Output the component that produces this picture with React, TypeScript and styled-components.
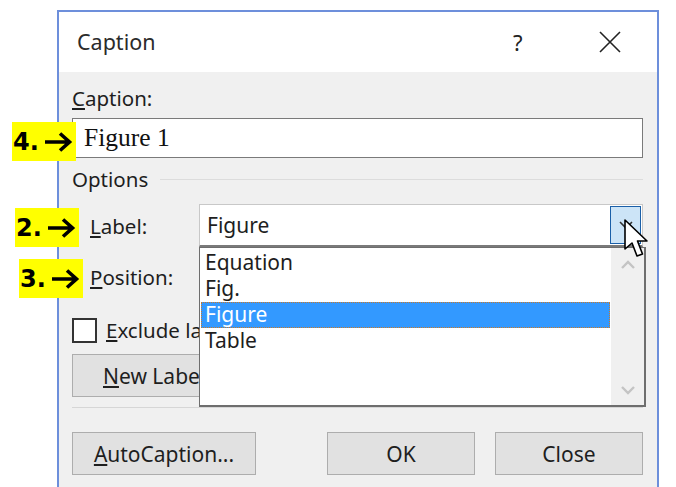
import * as React from 'react';
import styled, { createGlobalStyle } from 'styled-components';

const GlobalStyle = createGlobalStyle`
  html, body { margin: 0; padding: 0; background: #ffffff; }
  body { width: 676px; height: 487px; overflow: hidden; font-family: "Noto Sans", "Open Sans", sans-serif; }
`;

const Page = styled.div`
  position: relative;
  width: 676px;
  height: 487px;
  padding: 10px 0 0 57px;
  box-sizing: border-box;
  background: #ffffff;
`;

const Dialog = styled.div`
  position: relative;
  width: 602px;
  height: 477px;
  box-sizing: border-box;
  border: 2px solid #6d8fdb;
  border-bottom: none;
  display: flex;
  flex-direction: column;
  background: #f0f0f0;
`;

const TitleBar = styled.div`
  height: 60px;
  flex: none;
  background: #ffffff;
  display: flex;
  align-items: center;
  padding: 0 0 0 18px;
  color: #2b2b2b;
  font-size: 21.5px;
`;

const Title = styled.div`
  flex: 1;
  margin-top: -2px;
`;

const HelpMark = styled.div`
  width: 20px;
  margin-right: 66px;
  font-size: 22px;
  color: #222;
`;

const CloseBox = styled.div`
  width: 22px;
  height: 22px;
  margin-right: 36px;
  margin-top: -2px;
`;

const Body = styled.div`
  flex: 1;
  padding: 0 14px 0 13px;
  display: flex;
  flex-direction: column;
  color: #1e1e1e;
  font-size: 20.5px;
`;

const Label = styled.div<{ $top?: number }>`
  margin-top: ${(p) => p.$top ?? 0}px;
  height: 22px;
  line-height: 22px;
`;

const Key = styled.span`
  text-decoration: underline;
  text-underline-offset: 2px;
`;

const TextBox = styled.div`
  margin-top: 9px;
  height: 40px;
  box-sizing: border-box;
  border: 1px solid #7a7a7a;
  background: #ffffff;
  padding: 0 0 0 11px;
  display: flex;
  align-items: center;
  font-family: "Liberation Serif", serif;
  font-size: 25.5px;
  color: #111;
`;

const GroupHead = styled.div`
  margin-top: 10px;
  display: flex;
  align-items: center;
  gap: 12px;
  height: 22px;
  &::after {
    content: '';
    flex: 1;
    height: 1px;
    background: #dcdcdc;
    margin-top: 1px;
  }
`;

const FieldRow = styled.div<{ $top: number }>`
  margin-top: ${(p) => p.$top}px;
  height: 43px;
  display: flex;
  align-items: center;
`;

const FieldName = styled.div`
  width: 127px;
  padding-left: 18px;
  box-sizing: border-box;
`;

const Select = styled.div`
  position: relative;
  flex: 1;
  height: 43px;
  box-sizing: border-box;
  border: 1px solid #c8c8c8;
  border-bottom: 2px solid #7a7a7a;
  background: #ffffff;
  display: flex;
  align-items: center;
  padding-left: 7px;
  font-size: 21px;
`;

const DropButton = styled.div`
  position: absolute;
  right: 1px;
  top: 1px;
  width: 31px;
  height: 38px;
  box-sizing: border-box;
  border: 1px solid #1a5fa8;
  background: #cce4f7;
  display: flex;
  align-items: center;
  justify-content: center;
`;

const CheckRow = styled.div`
  margin-top: 19px;
  display: flex;
  align-items: center;
  gap: 9px;
  height: 26px;
`;

const Check = styled.div`
  width: 25px;
  height: 25px;
  flex: none;
  box-sizing: border-box;
  border: 2px solid #333;
  background: #fff;
`;

/* the list drops over these, so they stop at its left edge */
const Clip = styled.div<{ $w: number }>`
  width: ${(p) => p.$w}px;
  overflow: hidden;
  white-space: nowrap;
`;

const Button = styled.div<{ $w: number }>`
  width: ${(p) => p.$w}px;
  height: 43px;
  flex: none;
  box-sizing: border-box;
  border: 1px solid #adadad;
  background: #e1e1e1;
  display: flex;
  align-items: center;
  justify-content: center;
  font-size: 21px;
  color: #1e1e1e;
`;

const NewLabelButton = styled(Button)`
  justify-content: flex-start;
  padding-left: 30px;
`;

const NewLabelRow = styled.div`
  margin-top: 11px;
  display: flex;
`;

const Separator = styled.div`
  margin-top: 10px;
  height: 1px;
  background: #d6d6d6;
`;

const ButtonRow = styled.div`
  margin-top: 24px;
  display: flex;
  gap: 20px;
  & > :first-child { margin-right: 51px; }
`;

const ListBox = styled.div`
  position: absolute;
  left: 140px;
  top: 235px;
  width: 447px;
  height: 160px;
  box-sizing: border-box;
  border: 1px solid #6e6e6e;
  border-right-width: 2px;
  border-bottom-width: 2px;
  background: #ffffff;
  display: flex;
`;

const Items = styled.div`
  flex: 1;
  padding: 2px 1px 0 1px;
  font-size: 21px;
  color: #1e1e1e;
`;

const Item = styled.div<{ $active?: boolean }>`
  height: 26px;
  line-height: 25px;
  padding-left: 4px;
  box-sizing: border-box;
  background: ${(p) => (p.$active ? '#3399ff' : 'transparent')};
  color: ${(p) => (p.$active ? '#ffffff' : 'inherit')};
  outline: ${(p) => (p.$active ? '1px dotted #c87a2c' : 'none')};
  outline-offset: -1px;
`;

const ScrollTrack = styled.div`
  width: 33px;
  background: #f0f0f0;
  display: flex;
  flex-direction: column;
  justify-content: space-between;
  align-items: center;
  padding: 12px 0 10px;
`;

const Callout = styled.div<{ $left: number; $top: number }>`
  position: absolute;
  left: ${(p) => p.$left}px;
  top: ${(p) => p.$top}px;
  width: 64px;
  height: 39px;
  background: #ffff00;
  display: flex;
  align-items: center;
  padding-left: 1px;
  box-sizing: border-box;
  gap: 5px;
  font-family: "DejaVu Sans", sans-serif;
  font-weight: bold;
  font-size: 24px;
  color: #000;
`;

const Pointer = styled.svg`
  position: absolute;
  left: 623px;
  top: 218px;
`;

const Arrow = () => (
  <svg width="29" height="22" viewBox="0 0 29 22">
    <path d="M1 11 H25 M16 2.5 L25.5 11 L16 19.5" fill="none" stroke="#000" strokeWidth="3.6" />
  </svg>
);

const Chevron = ({ up }: { up?: boolean }) => (
  <svg width="16" height="10" viewBox="0 0 16 10">
    <path d={up ? 'M2 8 L8 2 L14 8' : 'M2 2 L8 8 L14 2'} fill="none" stroke="#c4c4c4" strokeWidth="2.4" />
  </svg>
);

export default function App() {
  return (
    <Page>
      <GlobalStyle />
      <Dialog>
        <TitleBar>
          <Title>Caption</Title>
          <HelpMark>?</HelpMark>
          <CloseBox>
            <svg width="22" height="22" viewBox="0 0 22 22">
              <path d="M1 1 L21 21 M21 1 L1 21" stroke="#222" strokeWidth="1.6" />
            </svg>
          </CloseBox>
        </TitleBar>
        <Body>
          <Label $top={15}>
            <Key>C</Key>aption:
          </Label>
          <TextBox>Figure 1</TextBox>
          <GroupHead>Options</GroupHead>
          <FieldRow $top={14}>
            <FieldName>
              <Key>L</Key>abel:
            </FieldName>
            <Select>
              Figure
              <DropButton>
                <svg width="14" height="10" viewBox="0 0 14 10">
                  <path d="M1 2 L7 8 L13 2" fill="none" stroke="#333" strokeWidth="1.6" />
                </svg>
              </DropButton>
            </Select>
          </FieldRow>
          <FieldRow $top={8}>
            <FieldName>
              <Key>P</Key>osition:
            </FieldName>
            <Select />
          </FieldRow>
          <CheckRow>
            <Check />
            <Clip $w={93}>
              <Key>E</Key>xclude label from caption
            </Clip>
          </CheckRow>
          <NewLabelRow>
            <Clip $w={127}>
              <NewLabelButton $w={170}>
                <span>
                  <Key>N</Key>ew Label...
                </span>
              </NewLabelButton>
            </Clip>
          </NewLabelRow>
          <Separator />
          <ButtonRow>
            <Button $w={184}>
              <span>
                <Key>A</Key>utoCaption...
              </span>
            </Button>
            <Button $w={148}>OK</Button>
            <Button $w={148}>Close</Button>
          </ButtonRow>
        </Body>
        <ListBox>
          <Items>
            <Item>Equation</Item>
            <Item>Fig.</Item>
            <Item $active>Figure</Item>
            <Item>Table</Item>
          </Items>
          <ScrollTrack>
            <Chevron up />
            <Chevron />
          </ScrollTrack>
        </ListBox>
      </Dialog>
      <Callout $left={12} $top={122}>
        4. <Arrow />
      </Callout>
      <Callout $left={15} $top={208}>
        2. <Arrow />
      </Callout>
      <Callout $left={19} $top={259}>
        3. <Arrow />
      </Callout>
      <Pointer width="28" height="42" viewBox="0 0 28 42">
        <path d="M2 2 L2 31 L9 25 L14 38 L19.5 36 L14.5 23 L24 23 Z" fill="#fff" stroke="#000" strokeWidth="1.6" strokeLinejoin="round" />
      </Pointer>
    </Page>
  );
}
